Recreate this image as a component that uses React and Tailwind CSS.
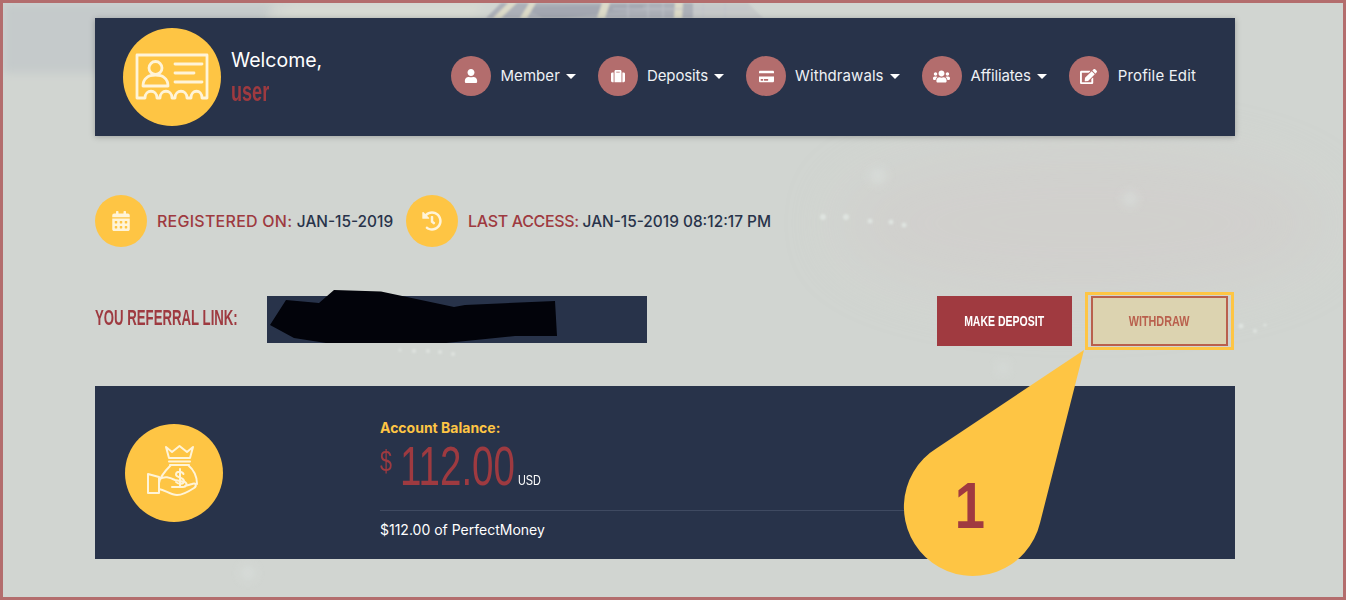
import React from "react";
import { FaUser, FaSuitcase, FaCreditCard, FaUsers, FaEdit, FaCalendarAlt, FaHistory } from "react-icons/fa";

const sans = "font-['Inter','Noto_Sans',sans-serif]";
const arial = "font-['Liberation_Sans',sans-serif]";

function Backdrop() {
  return (
    <svg className="absolute inset-0 w-[1340px] h-[594px]" viewBox="0 0 1340 594" aria-hidden="true">
      <defs>
        <filter id="b1" x="-50%" y="-100%" width="200%" height="300%"><feGaussianBlur stdDeviation="30" /></filter>
        <filter id="b2"><feGaussianBlur stdDeviation="1" /></filter>
        <filter id="b3" x="-50%" y="-50%" width="200%" height="200%"><feGaussianBlur stdDeviation="5" /></filter>
        <filter id="b4"><feGaussianBlur stdDeviation="0.8" /></filter>
      </defs>
      <path d="M0 0H270L240 70H0Z" fill="#c5cacb" filter="url(#b3)" />
      <path d="M290 0H480L470 15H270Z" fill="#d7dad3" filter="url(#b3)" />
      <ellipse cx="1080" cy="220" rx="240" ry="70" fill="#d1cfcc" opacity="0.8" filter="url(#b1)" />
      <g filter="url(#b4)">
        <path d="M483 15L498 0H740L760 15Z" fill="#acb0b8" />
        <path d="M690 0H745L760 15H690Z" fill="#c6c9c9" />
        <path d="M520 4L640 2V6L560 15H540Z" fill="#a3a7b1" />
        <path d="M490 15L505 0H514L498 15ZM517 15L526 0H533L524 15ZM594 15L599 0H607L602 15ZM671 15L672 0H680L679 15Z" fill="#dcdac8" />
        <path d="M610 6H680M690 6H745M625 0V15M645 0V15M660 0V15M700 0V15M722 0V15" stroke="#bfc2ca" strokeWidth="1" fill="none" />
      </g>
      <g fill="#dfe4e0" filter="url(#b2)">
        <circle cx="820" cy="214" r="3" /><circle cx="843" cy="214" r="3" /><circle cx="867" cy="218" r="2.500" /><circle cx="888" cy="219" r="2.500" /><circle cx="901" cy="222" r="2.500" />
        <circle cx="397" cy="347" r="1.500" /><circle cx="411" cy="348" r="2" /><circle cx="425" cy="348" r="2" /><circle cx="437" cy="349" r="2" /><circle cx="450" cy="351" r="2" />
        <circle cx="1238" cy="323" r="2.500" /><circle cx="1252" cy="328" r="2" /><circle cx="1262" cy="322" r="1.500" />
      </g>
      <g fill="#d9dedb" filter="url(#b3)" opacity="0.8">
        <circle cx="1127" cy="196" r="7" /><circle cx="875" cy="173" r="8" /><circle cx="245" cy="570" r="7" /><circle cx="1000" cy="365" r="5" />
      </g>
    </svg>
  );
}

function Caret() {
  return <span className="ml-[6px] w-0 h-0 border-l-[5px] border-r-[5px] border-t-[5px] border-l-transparent border-r-transparent border-t-white" />;
}

function NavItem({ icon, label, caret, labelClass }) {
  return (
    <div className="flex items-center">
      <span className="w-10 h-10 rounded-full bg-[#b36d6d] flex items-center justify-center text-white text-[14px]">{icon}</span>
      <span className={`ml-[9px] text-[15px] text-[#eef1f5] ${sans} ${labelClass}`}>{label}</span>
      {caret && <Caret />}
    </div>
  );
}

function IdCard() {
  return (
    <svg width="98" height="98" viewBox="0 0 98 98" fill="none" stroke="#fff4d8" strokeWidth="2.800" strokeLinecap="round" strokeLinejoin="round">
      <path d="M14 70V27H84V70H79C79 61 68 61 68 70H64C64 61 52 61 52 70H49C49 61 37 61 37 70H34C34 61 22 61 22 70Z" />
      <circle cx="32.500" cy="40" r="6.500" />
      <path d="M20 58C20 50 26 47 32.500 47C39 47 45 50 45 58Z" />
      <path d="M52 36H79M52 45H71M52 54H79" />
    </svg>
  );
}

function MoneyBag() {
  return (
    <svg width="98" height="98" viewBox="0 0 98 98" fill="none" stroke="#fff4d8" strokeWidth="2" strokeLinecap="round" strokeLinejoin="round">
      <path d="M41 23L47 28L54.500 22L62 28L68 23L65 34H44Z" />
      <path d="M44 37.500H65M45 41H64" />
      <path d="M46 41C41 46 35 52 34 59M63 41C69 46 72 52 72 60" />
      <path d="M58.500 50C57 47 51 47 51 50.500C51 54 59 53 59 57C59 60.500 53 60.500 51 58M55 45V63" />
      <path d="M23 50L34 53V69L23 69Z" />
      <path d="M34 55C40 52 44 53 50 56L60 58C63 60 61 63 58 63H47M34 65C40 66 46 71 52 71C58 71 66 66 69 64C72 62 71 58 67 60L60 62" />
    </svg>
  );
}

function YellowBadge({ children }) {
  return <span className="w-[52px] h-[52px] rounded-full bg-[#fec544] flex items-center justify-center text-[#fff4d8] text-[20px] shrink-0">{children}</span>;
}

function Cond({ className, children }) {
  return <span className={`inline-block whitespace-nowrap ${className}`}>{children}</span>;
}

export default function App() {
  return (
    <div className="relative w-[1346px] h-[600px] overflow-hidden border-[3px] border-[#b36d6d] bg-[#d1d5d1]">
      <Backdrop />
      <div className="relative w-[1140px] ml-[92px] pt-[15px]">
        <header className="h-[118px] bg-[#28334a] flex items-center pl-[28px] pr-[39px] shadow-[0_1px_6px_rgba(0,0,0,0.25)]">
          <div className="w-[98px] h-[98px] rounded-full bg-[#fec544] shrink-0"><IdCard /></div>
          <div className="ml-[10px] w-[120px] mt-[2px]">
            <div className={`text-[19.500px] leading-[26px] text-white ${sans}`}>Welcome,</div>
            <div className={`mt-[6px] leading-[26px] ${arial}`}>
              <Cond className="text-[27px] font-bold text-[#9e3a40] origin-left scale-x-[0.67]">user</Cond>
            </div>
          </div>
          <nav className="ml-auto flex items-center gap-[22px] -mt-[2px]">
            <NavItem icon={<FaUser />} label="Member" caret labelClass="tracking-[0.08px]" />
            <NavItem icon={<FaSuitcase />} label="Deposits" caret labelClass="tracking-[-0.1px]" />
            <NavItem icon={<FaCreditCard className="text-[15px]" />} label="Withdrawals" caret labelClass="tracking-[0.07px]" />
            <NavItem icon={<FaUsers className="text-[17px]" />} label="Affiliates" caret labelClass="tracking-[-0.15px]" />
            <NavItem icon={<FaEdit className="text-[17px]" />} label="Profile Edit" labelClass="tracking-[0.15px]" />
          </nav>
        </header>

        <section className="mt-[59px] flex items-center">
          <YellowBadge><FaCalendarAlt /></YellowBadge>
          <p className={`ml-[10px] text-[16px] font-medium text-[#9e3a40] tracking-[0.25px] ${sans}`}>REGISTERED ON: <span className="text-[15.400px] tracking-normal text-[#28334a]">JAN-15-2019</span></p>
          <span className="ml-[13px]"><YellowBadge><FaHistory /></YellowBadge></span>
          <p className={`ml-[10px] text-[16px] font-medium text-[#9e3a40] tracking-[-0.35px] ${sans}`}>LAST ACCESS: <span className="text-[15.400px] tracking-normal text-[#28334a]">JAN-15-2019 08:12:17 PM</span></p>
        </section>

        <section className="mt-[45px] h-[58px] flex items-center">
          <div className={`w-[172px] -mt-[8px] ${arial}`}>
            <Cond className="text-[22px] font-bold text-[#9e3a40] origin-left scale-x-[0.6]">YOU REFERRAL LINK:</Cond>
          </div>
          <div className="relative w-[380px] h-[47px] -mt-[3px] bg-[#28334a]">
            <svg className="absolute -top-[8px] left-0" width="300" height="56" viewBox="0 0 300 56">
              <path d="M3 37L19 12L52 15L67 2L114 3.500L187 19L198 17L288 13L290 48L248 48L179 55L59 55L27 50Z" fill="#02030a" />
            </svg>
          </div>
          <button className={`ml-auto w-[135px] h-[50px] bg-[#a03a40] text-white ${arial}`}>
            <Cond className="text-[15px] font-bold scale-x-[0.7]">MAKE DEPOSIT</Cond>
          </button>
          <div className="ml-[13px] mr-px w-[149px] h-[58px] border-[3px] border-[#fec544] p-[1px] pl-[3px] pr-[3px]">
            <button className={`w-full h-full border-[2.500px] border-[#b9604d] bg-[#dcd3b0] text-[#b9604d] ${arial}`}>
              <Cond className="text-[15px] font-bold scale-x-[0.72]">WITHDRAW</Cond>
            </button>
          </div>
        </section>

        <section className="mt-[36px] h-[173px] bg-[#28334a] flex pl-[30px]">
          <div className="mt-[38px] w-[98px] h-[98px] rounded-full bg-[#fec544] shrink-0"><MoneyBag /></div>
          <div className="ml-[157px] pt-[33px] w-[660px]">
            <div className={`text-[14px] leading-[18px] font-bold text-[#fec544] ${sans}`}>Account Balance:</div>
            <div className={`relative h-[71px] text-[#9e3a40] ${arial}`}>
              <Cond className="absolute left-0 top-[7px] text-[30px] leading-[34px] origin-left scale-x-[0.72]">$</Cond>
              <Cond className="absolute left-[20px] top-[-3px] text-[55px] leading-[64px] origin-left scale-x-[0.7]">112.00</Cond>
              <Cond className="absolute left-[138px] top-[34px] text-[15px] leading-[18px] text-white origin-left scale-x-[0.72]">USD</Cond>
            </div>
            <div className="mt-[2px] border-t border-[#3f4a61] pt-[6px]">
              <span className={`text-[14px] leading-[18px] text-white ${sans}`}>$112.00 of PerfectMoney</span>
            </div>
          </div>
        </section>
      </div>

      <svg className="absolute left-[-3px] top-[-3px]" width="1346" height="600" viewBox="0 0 1346 600" aria-hidden="true">
        <path d="M1084 350L937 448A69 69 0 1 0 1040 523Z" fill="#fec544" />
      </svg>
      <span className={`absolute left-[949px] top-[468px] text-[64px] leading-[70px] font-bold text-[#a03a40] scale-x-[0.85] ${arial}`}>1</span>
    </div>
  );
}
